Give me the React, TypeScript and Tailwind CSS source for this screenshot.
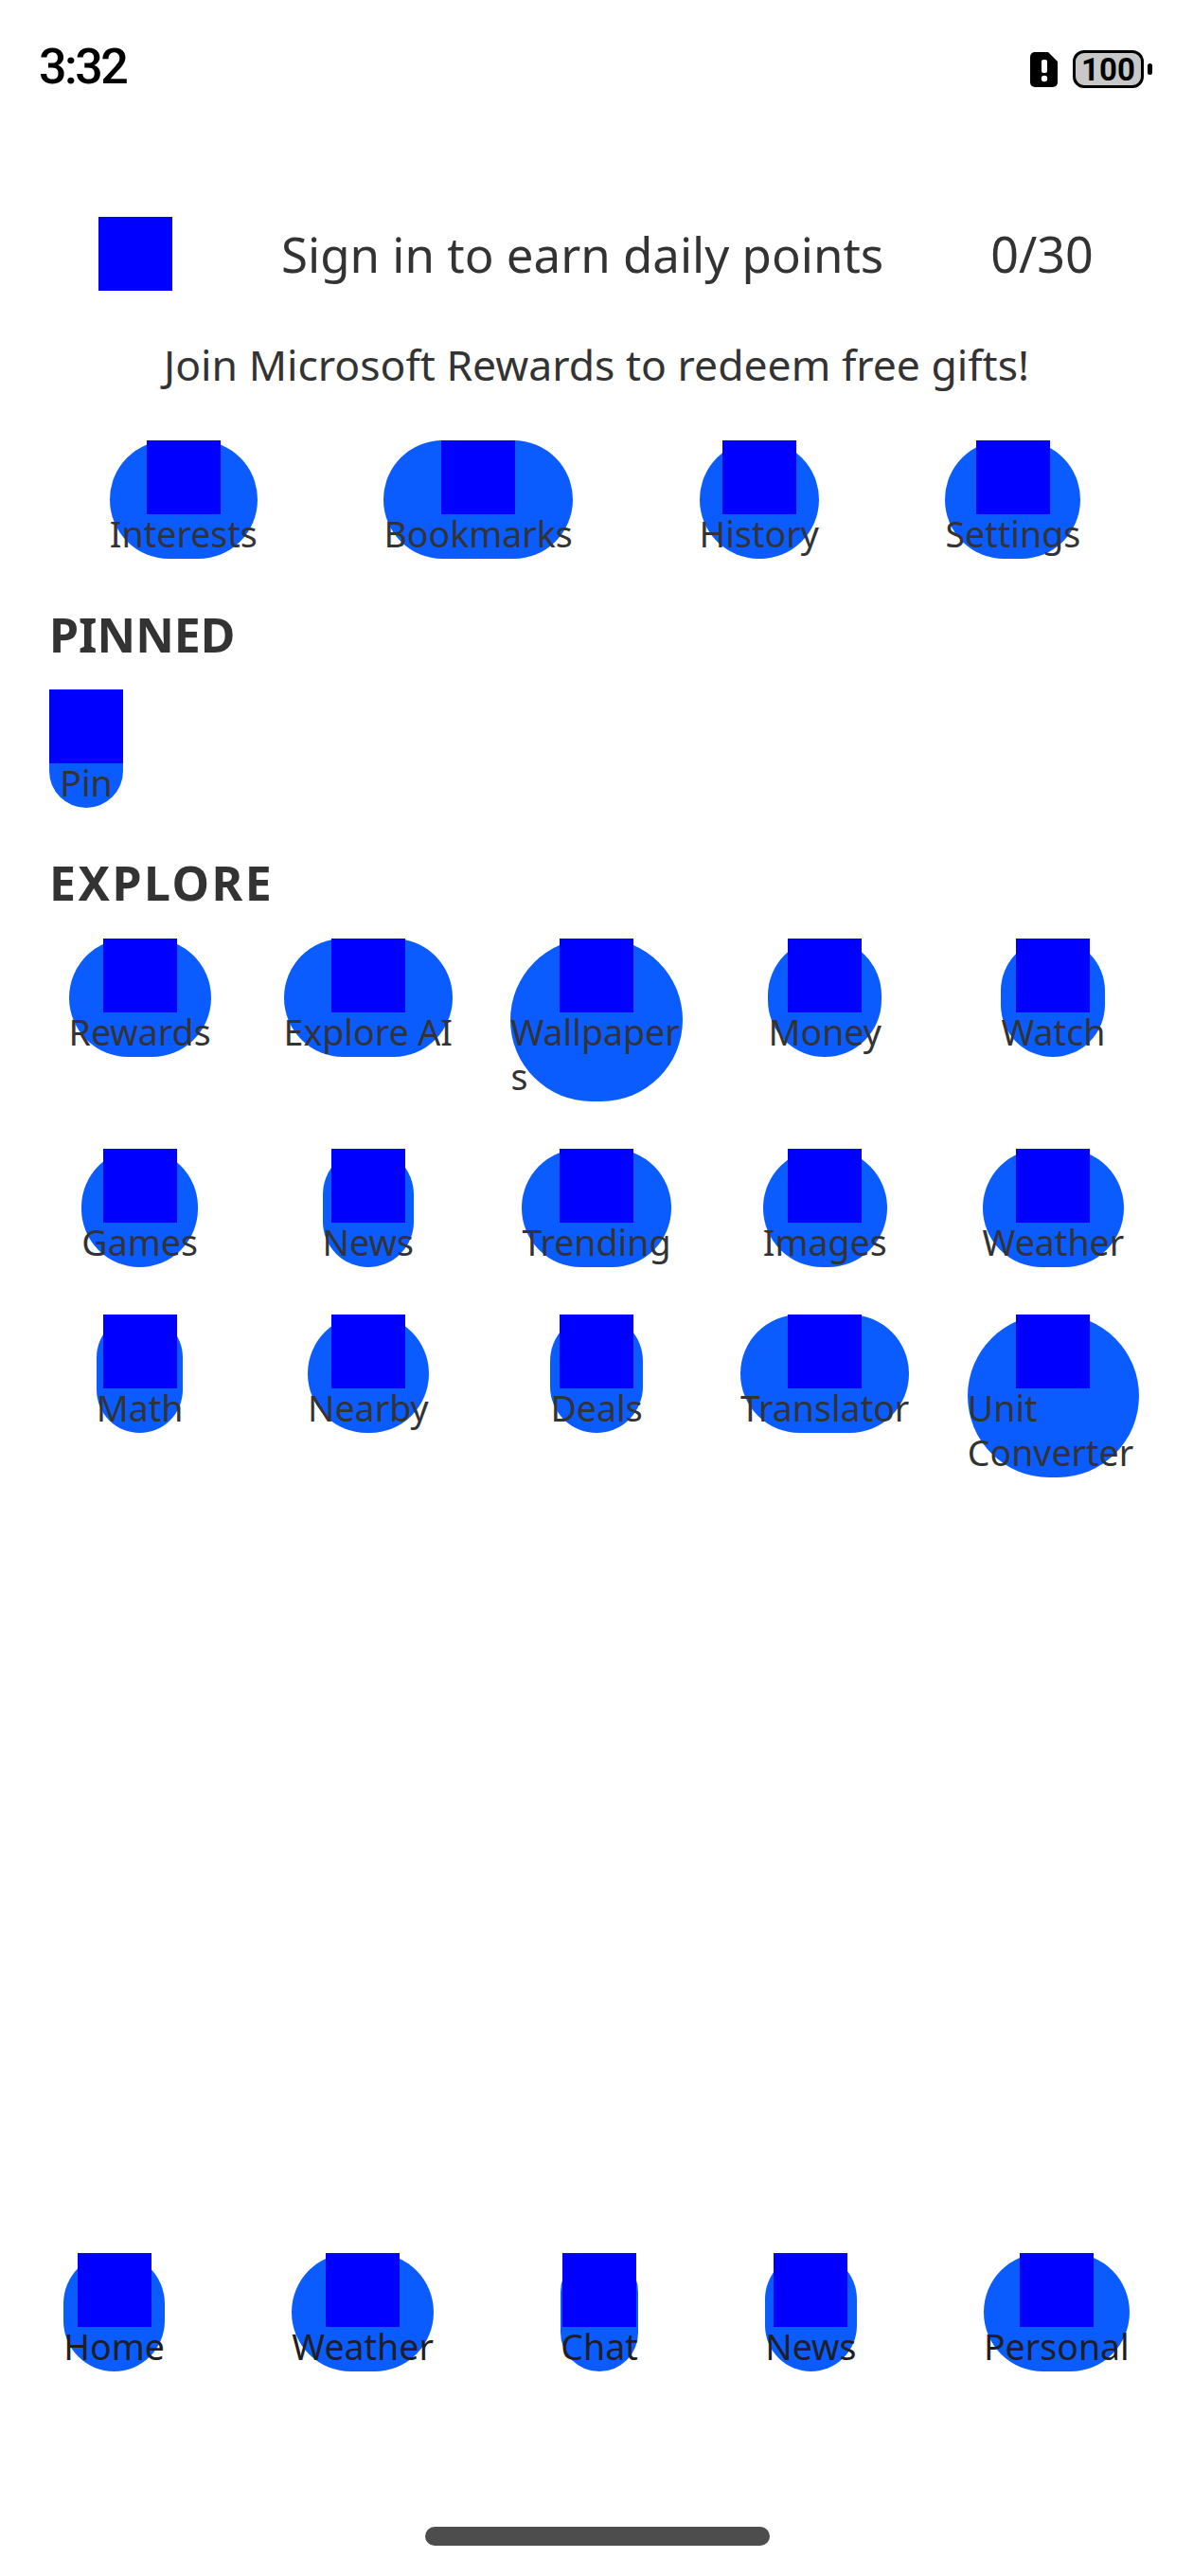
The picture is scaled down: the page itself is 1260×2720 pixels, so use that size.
const sans = "font-['Noto_Sans','Liberation_Sans',sans-serif]";

function Tile({ label, dark }: { label: string; dark?: boolean }) {
  return (
    <div className="flex flex-col items-center w-fit max-w-full rounded-full bg-[#0b5cff]">
      <div className="w-[78px] h-[78px] bg-[#0000ff] shrink-0" />
      <div className={`text-[37.5px] leading-[47px] -translate-y-[3px] text-left max-w-full min-w-0 [overflow-wrap:anywhere] ${dark ? "text-[#1f1f1f]" : "text-[#333333]"}`}>
        {label}
      </div>
    </div>
  );
}

function Cell({ label }: { label: string }) {
  return (
    <div className="flex justify-center px-[30px] min-w-0">
      <Tile label={label} />
    </div>
  );
}

const explore = [
  "Rewards", "Explore AI", "Wallpapers", "Money", "Watch",
  "Games", "News", "Trending", "Images", "Weather",
  "Math", "Nearby", "Deals", "Translator", "Unit Converter",
];

export default function App() {
  return (
    <div className={`${sans} w-[1260px] h-[2720px] bg-white flex flex-col`}>
      <div className="h-[141px] pt-[42px] pl-[41px] pr-[43px] flex justify-between items-start shrink-0">
        <span className="text-[52px] leading-[58px] font-medium tracking-[-2.5px] text-black font-['Roboto',sans-serif]">3:32</span>
        <div className="flex items-center gap-[16px] pt-[11px]">
          <svg width="29" height="37" viewBox="0 0 29 37">
            <path d="M5 0h14l10 10v22a5 5 0 0 1-5 5H5a5 5 0 0 1-5-5V5a5 5 0 0 1 5-5z" fill="#000" />
            <rect x="12" y="8" width="6" height="14" rx="2" fill="#fff" />
            <circle cx="15" cy="28" r="3.2" fill="#fff" />
          </svg>
          <div className="flex items-center gap-[4px]">
            <div className="w-[75px] h-[40px] rounded-[12px] border-[3px] border-black bg-[#c8c8c8] flex items-center justify-center text-[33px] leading-none font-bold text-black font-['Roboto',sans-serif]">
              100
            </div>
            <div className="w-[5px] h-[12px] rounded-full bg-black" />
          </div>
        </div>
      </div>

      <div className="mt-[88px] pl-[104px] flex items-center h-[78px]">
        <div className="w-[78px] h-[78px] bg-[#0000ff]" />
        <span className="ml-[115px] text-[51px] leading-[64px] text-[#333333] whitespace-nowrap">Sign in to earn daily points</span>
        <span className="ml-[113px] text-[52px] leading-[64px] text-[#333333]">0/30</span>
      </div>

      <div className="mt-[48px] text-center text-[44.5px] leading-[60px] text-[#333333]">
        Join Microsoft Rewards to redeem free gifts!
      </div>

      <div className="mt-[50px] pl-[49px] pr-[52px] flex justify-around">
        {["Interests", "Bookmarks", "History", "Settings"].map((l) => (
          <Tile key={l} label={l} />
        ))}
      </div>

      <div className="mt-[49px] ml-[52px] text-[50px] leading-[62px] font-bold text-[#333333]">PINNED</div>
      <div className="mt-[27px] ml-[52px]">
        <Tile label="Pin" />
      </div>

      <div className="mt-[48px] ml-[52px] text-[50px] leading-[62px] font-bold tracking-[2.5px] text-[#333333]">EXPLORE</div>
      <div className="mt-[28px] px-[27px] grid grid-cols-5 gap-y-[50px] items-start">
        {explore.map((l) => (
          <Cell key={l} label={l} />
        ))}
      </div>

      <div className="flex-1" />

      <div className="flex justify-around">
        {["Home", "Weather", "Chat", "News", "Personal"].map((l) => (
          <Tile key={l} label={l} dark />
        ))}
      </div>

      <div className="mt-[164px] mb-[32px] ml-[449px] w-[364px] h-[20px] rounded-full bg-[#4d4d4d]" />
    </div>
  );
}
